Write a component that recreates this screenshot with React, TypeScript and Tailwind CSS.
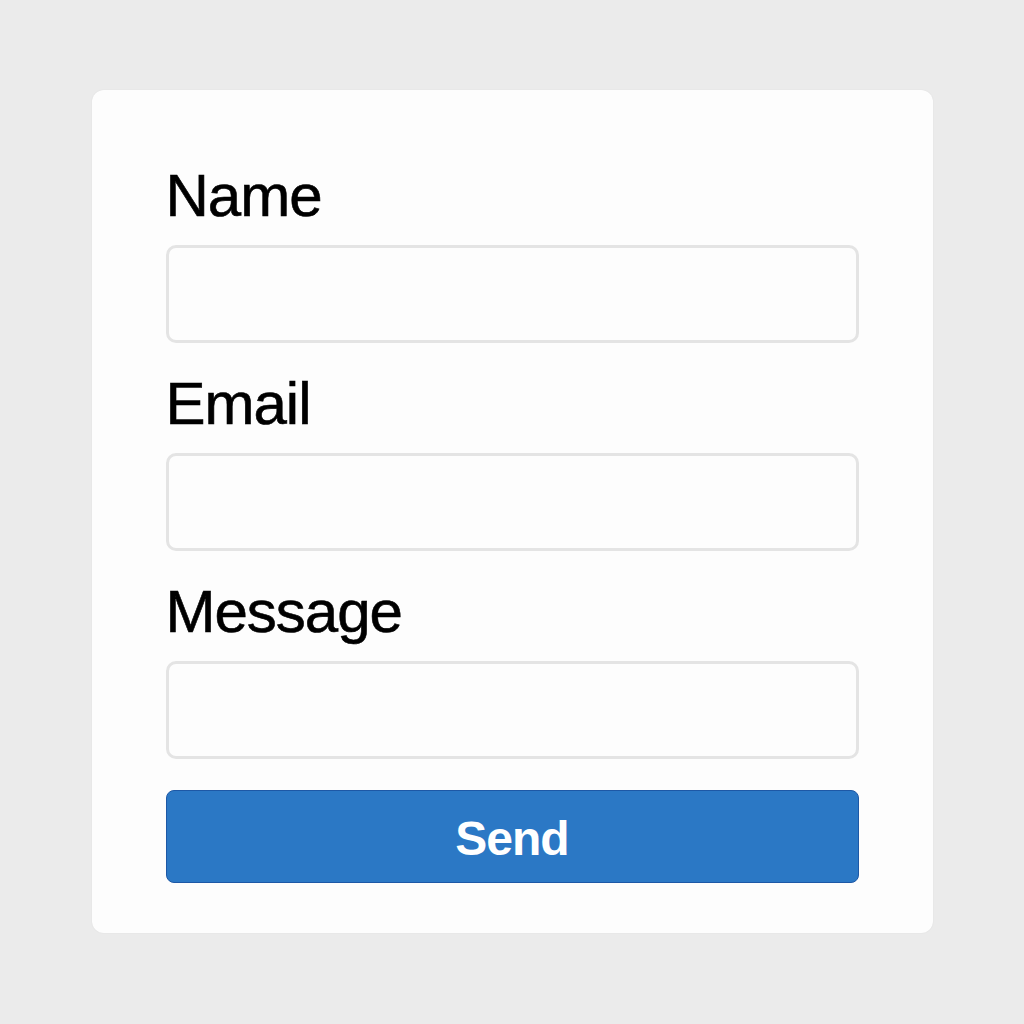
export default function App() {
  const fields = ['Name', 'Email', 'Message']

  return (
    <div
      className="min-h-screen w-full bg-[#ebebeb] flex justify-center pt-[90px]"
      style={{ fontFamily: '"Liberation Sans", Arial, sans-serif' }}
    >
      <form
        className="w-[841px] h-[843px] rounded-[12px] bg-[#fdfdfd] shadow-[0_0_2px_rgba(0,0,0,0.06)] px-[74px] pt-[76px] pb-[50px] flex flex-col"
        onSubmit={(e) => e.preventDefault()}
      >
        {fields.map((label, i) => (
          <div key={label} className={i > 0 ? 'mt-[31px]' : ''}>
            <label className="block text-[60px] leading-none tracking-[-1px] text-black [-webkit-text-stroke:0.6px_black]">
              {label}
            </label>
            <input
              type="text"
              className="mt-[19px] block w-full h-[98px] rounded-[10px] border-[3px] border-[#e4e4e4] bg-[#fdfdfd] outline-none"
            />
          </div>
        ))}

        {/* Submit */}
        <button
          type="submit"
          className="mt-[31px] w-full h-[93px] rounded-[8px] bg-[#2b78c5] border border-[#1d58a6] text-white font-bold text-[48px] tracking-[-1px] leading-none pt-[4px] flex items-center justify-center"
        >
          Send
        </button>
      </form>
    </div>
  )
}
